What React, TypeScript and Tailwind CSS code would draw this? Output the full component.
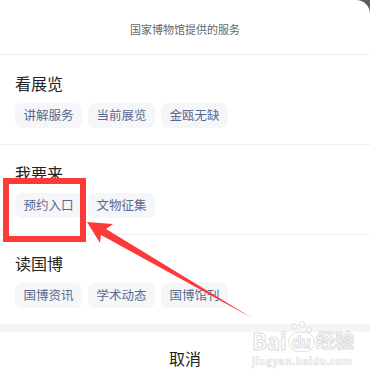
import React from "react";

const sections = [
  { title: "看展览", items: ["讲解服务", "当前展览", "金瓯无缺"] },
  { title: "我要来", items: ["预约入口", "文物征集"] },
  { title: "读国博", items: ["国博资讯", "学术动态", "国博馆刊"] },
];

const Watermark = () => (
  <div className="absolute left-[252px] top-[328px] flex flex-col items-start pointer-events-none">
    <div className="flex items-end text-[22px] leading-[24px] font-bold text-white [-webkit-text-stroke:1px_#dcdcdc]">
      <span>Bai</span>
      <span className="relative mx-[1px] text-[15px] leading-[18px] px-[3px] rounded-full border border-[#e2e2e2]">
        du
        <span className="absolute -top-[10px] left-[2px] w-[6px] h-[7px] rounded-full border border-[#e2e2e2]" />
        <span className="absolute -top-[12px] left-[10px] w-[6px] h-[7px] rounded-full border border-[#e2e2e2]" />
        <span className="absolute -top-[7px] left-[17px] w-[6px] h-[7px] rounded-full border border-[#e2e2e2]" />
      </span>
      <span className="text-[19px]">经验</span>
    </div>
    <div className="text-[10px] leading-[14px] mt-[2px] font-bold text-white [-webkit-text-stroke:0.6px_#dddddd] tracking-[0.5px]">
      jingyan.baidu.com
    </div>
  </div>
);

export default function App() {
  return (
    <div className="w-[370px] h-[383px] bg-[#5c5c5c] overflow-hidden font-['Noto_Sans_CJK_SC','Noto_Sans',sans-serif]">
      <div className="relative w-full h-full bg-white rounded-tr-[14px] flex flex-col">
        <div className="h-[55px] pt-[5px] flex items-center justify-center border-b border-[#eeeeee] text-[11px] text-[#666]">
          国家博物馆提供的服务
        </div>
        {sections.map((s, i) => (
          <div
            key={s.title}
            className={`px-[15px] pt-[16px] pb-[16px] flex flex-col gap-[8px] ${i < 2 ? "border-b border-[#eeeeee]" : ""}`}
          >
            <h2 className="text-[16px] leading-[24px] text-[#222]">{s.title}</h2>
            <div className="flex gap-[6px]">
              {s.items.map((it) => (
                <span
                  key={it}
                  className="h-[25px] w-[67px] flex items-center justify-center rounded-[7px] bg-[#f5f6f8] text-[12.5px] text-[#5b6890]"
                >
                  {it}
                </span>
              ))}
            </div>
          </div>
        ))}
        <div className="h-[8px] bg-[#f5f5f5]" />
        <div className="flex-1 flex items-center justify-center text-[16px] text-[#222]">取消</div>

        <Watermark />

        {/* annotation */}
        <div className="absolute left-[3px] top-[178px] w-[83px] h-[64px] border-[6px] border-[#fd3a3a]" />
        <svg className="absolute left-0 top-0" width="370" height="383" viewBox="0 0 370 383">
          <polygon
            points="87,222 113,224 106,229 252,318 101,235 100,243"
            fill="#fd3a3a"
          />
        </svg>
      </div>
    </div>
  );
}
